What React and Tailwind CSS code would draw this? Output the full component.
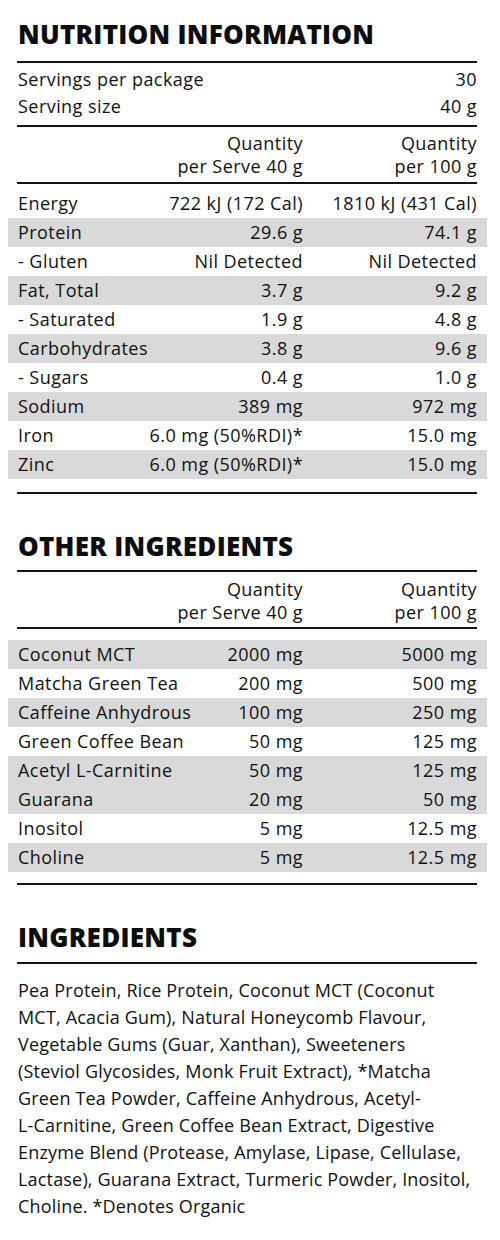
import React from "react";

const nutrition = [
  ["Energy", "722 kJ (172 Cal)", "1810 kJ (431 Cal)", false],
  ["Protein", "29.6 g", "74.1 g", true],
  ["- Gluten", "Nil Detected", "Nil Detected", false],
  ["Fat, Total", "3.7 g", "9.2 g", true],
  ["- Saturated", "1.9 g", "4.8 g", false],
  ["Carbohydrates", "3.8 g", "9.6 g", true],
  ["- Sugars", "0.4 g", "1.0 g", false],
  ["Sodium", "389 mg", "972 mg", true],
  ["Iron", "6.0 mg (50%RDI)*", "15.0 mg", false],
  ["Zinc", "6.0 mg (50%RDI)*", "15.0 mg", true],
];

const others = [
  ["Coconut MCT", "2000 mg", "5000 mg", true],
  ["Matcha Green Tea", "200 mg", "500 mg", false],
  ["Caffeine Anhydrous", "100 mg", "250 mg", true],
  ["Green Coffee Bean", "50 mg", "125 mg", false],
  ["Acetyl L-Carnitine", "50 mg", "125 mg", true],
  ["Guarana", "20 mg", "50 mg", true],
  ["Inositol", "5 mg", "12.5 mg", false],
  ["Choline", "5 mg", "12.5 mg", true],
];

const ingredientLines = [
  "Pea Protein, Rice Protein, Coconut MCT (Coconut",
  "MCT, Acacia Gum), Natural Honeycomb Flavour,",
  "Vegetable Gums (Guar, Xanthan), Sweeteners",
  "(Steviol Glycosides, Monk Fruit Extract), *Matcha",
  "Green Tea Powder, Caffeine Anhydrous, Acetyl-",
  "L-Carnitine, Green Coffee Bean Extract, Digestive",
  "Enzyme Blend (Protease, Amylase, Lipase, Cellulase,",
  "Lactase), Guarana Extract, Turmeric Powder, Inositol,",
  "Choline. *Denotes Organic",
];

const Rule = () => <div className="ml-[9px] mr-[10px] h-[2px] bg-[#141414]" />;

const Heading = ({ children, className }) => (
  <div className={`flex items-center px-[10px] ${className}`}>
    <h2 className="text-[26px] leading-none font-extrabold tracking-[0.01em] text-[#0d0d0d]">
      {children}
    </h2>
  </div>
);

const QtyHeader = ({ className }) => (
  <div className={`flex px-[10px] leading-[23px] ${className}`}>
    <div className="flex-1" />
    <div className="text-right">
      Quantity
      <br />
      per Serve 40 g
    </div>
    <div className="w-[174px] text-right">
      Quantity
      <br />
      per 100 g
    </div>
  </div>
);

const Row = ({ label, serve, per100, shaded }) => (
  <div
    className={`flex h-[29px] items-center px-[10px] whitespace-nowrap ${
      shaded ? "bg-[#d9d9d9]" : ""
    }`}
  >
    <div className="flex-1">{label}</div>
    <div className="text-right">{serve}</div>
    <div className="w-[174px] text-right">{per100}</div>
  </div>
);

export default function App() {
  return (
    <div className="w-[500px] h-[1240px] bg-white pl-[8px] pr-[13px] text-[18px] text-[#111] font-['Open_Sans',sans-serif] tracking-[0.025em]">
      {/* Nutrition information */}
      <Heading className="h-[61px] pt-[7px]">NUTRITION INFORMATION</Heading>
      <Rule />
      <div className="px-[10px] pt-[3px] pb-[5px]">
        <div className="flex h-[27px] items-center justify-between">
          <span>Servings per package</span>
          <span>30</span>
        </div>
        <div className="flex h-[27px] items-center justify-between">
          <span>Serving size</span>
          <span>40 g</span>
        </div>
      </div>
      <Rule />
      <QtyHeader className="pt-[5px] pb-[4px]" />
      <Rule />
      <div className="pt-[5px] pb-[13px]">
        {nutrition.map(([l, s, p, sh]) => (
          <Row key={l} label={l} serve={s} per100={p} shaded={sh} />
        ))}
      </div>
      <Rule />

      {/* Other ingredients */}
      <Heading className="h-[76px] pt-[28px]">OTHER INGREDIENTS</Heading>
      <Rule />
      <QtyHeader className="pt-[6px] pb-[3px]" />
      <Rule />
      <div className="pt-[11px] pb-[11px]">
        {others.map(([l, s, p, sh]) => (
          <Row key={l} label={l} serve={s} per100={p} shaded={sh} />
        ))}
      </div>
      <Rule />

      {/* Ingredients */}
      <Heading className="h-[77px] pt-[27px]">INGREDIENTS</Heading>
      <Rule />
      <p className="px-[10px] pt-[13px] leading-[27px] whitespace-nowrap tracking-[0.01em]">
        {ingredientLines.map((line) => (
          <span key={line} className="block">
            {line}
          </span>
        ))}
      </p>
    </div>
  );
}
